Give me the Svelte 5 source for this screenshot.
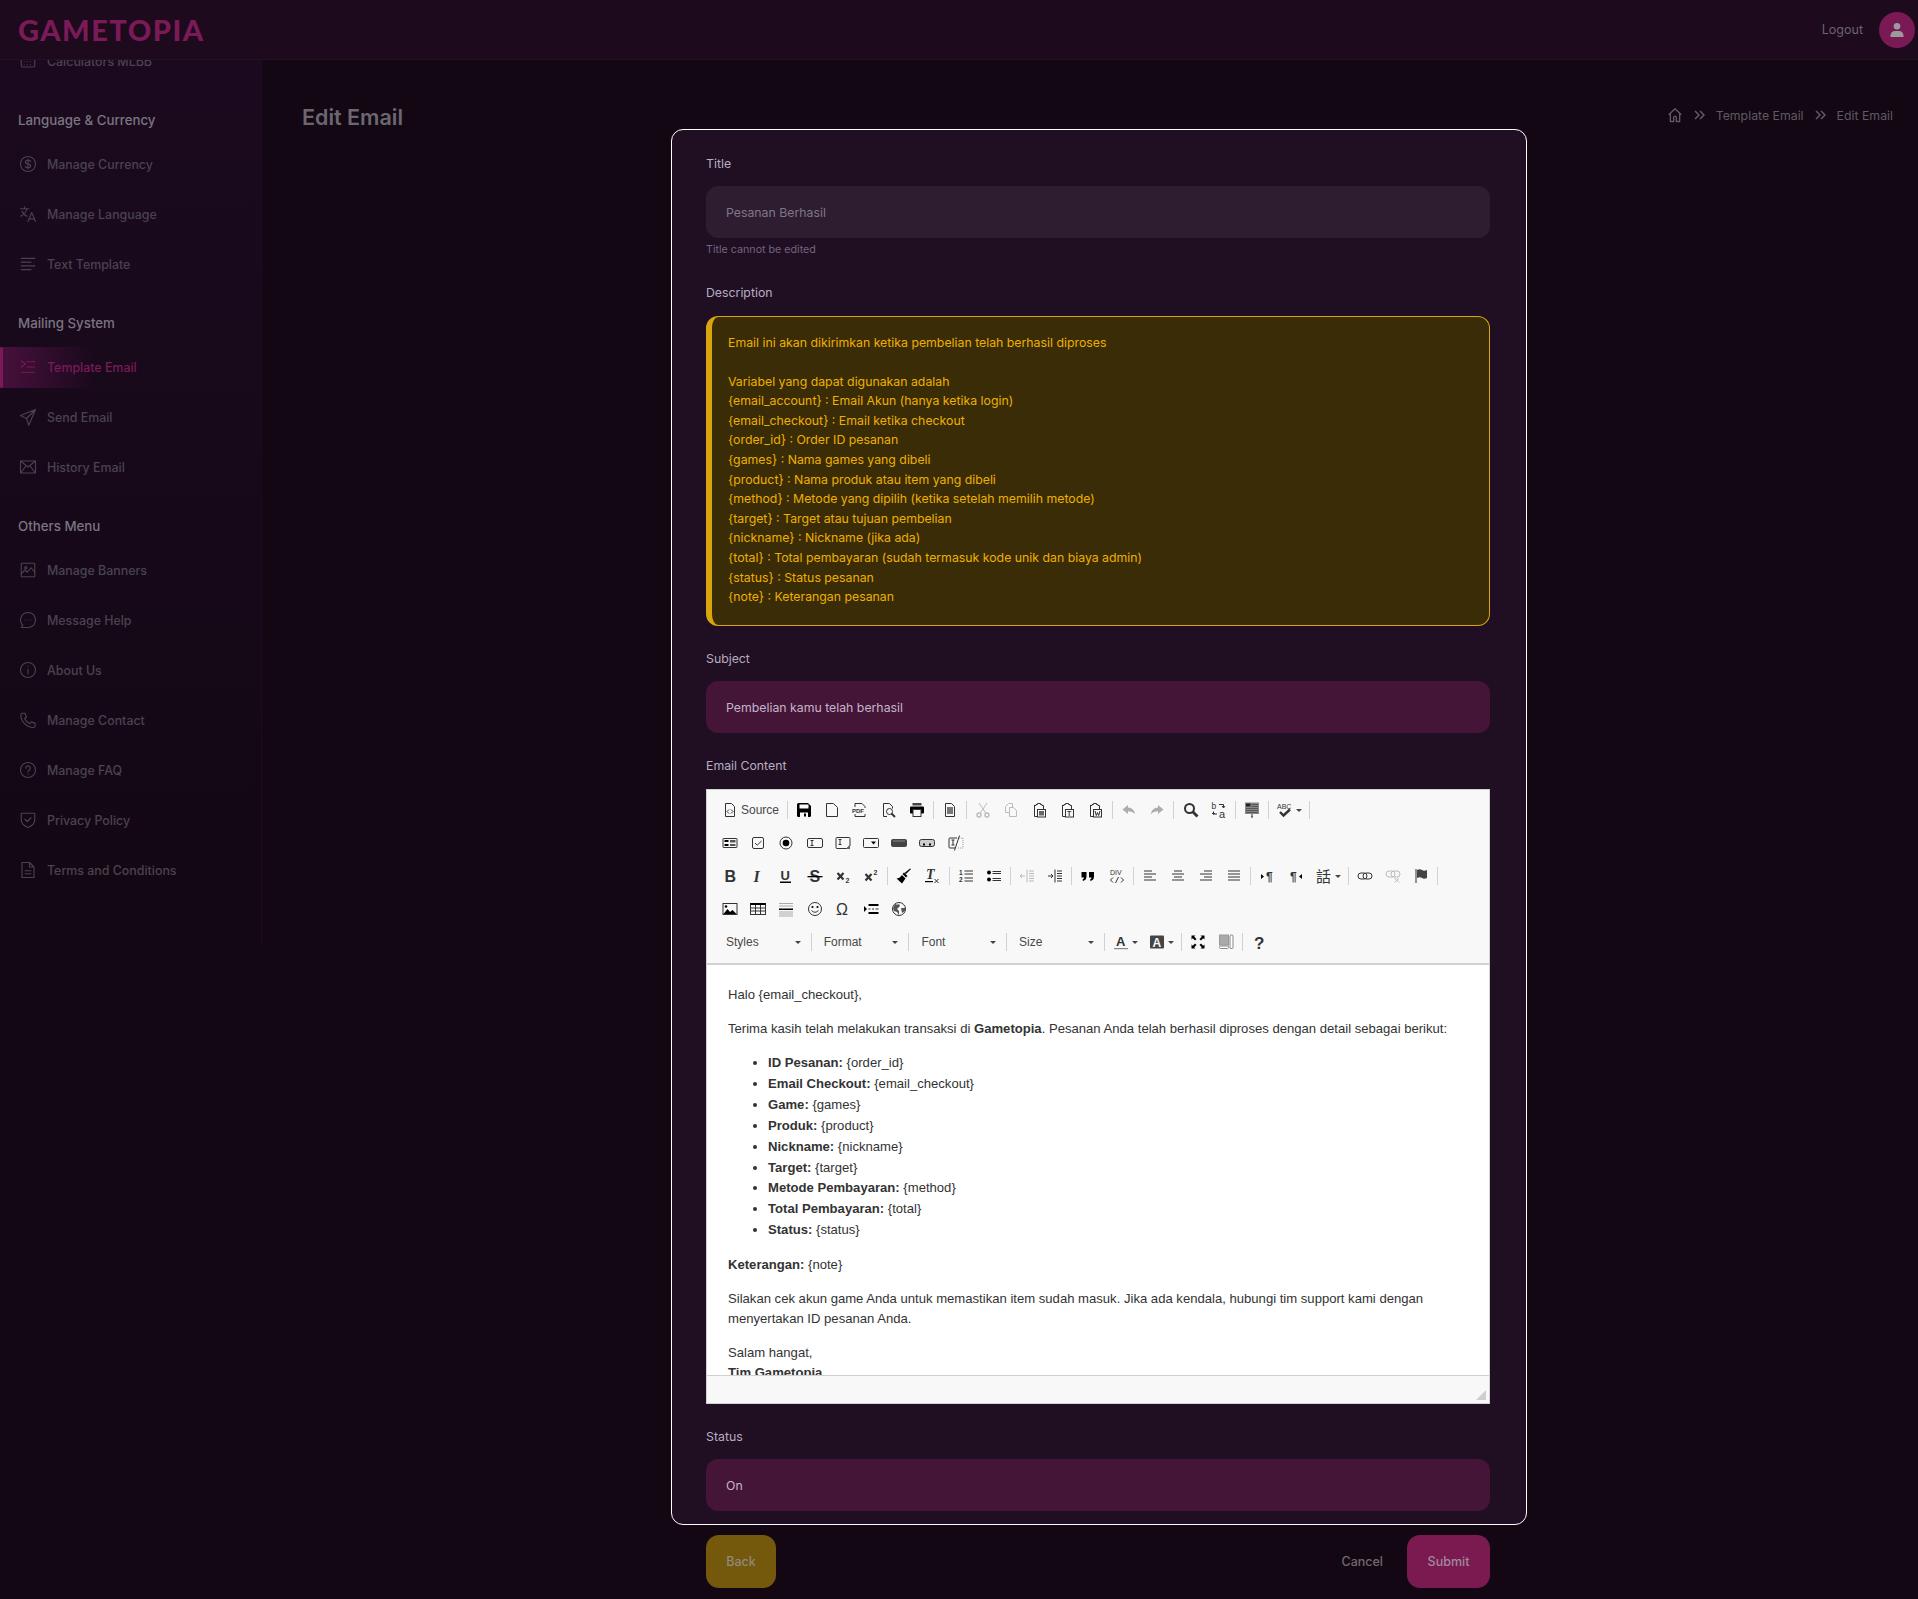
<script>
  const line = 'fill="none" stroke="#333" stroke-width="1"';
  const line2 = 'fill="none" stroke="#333" stroke-width="2"';
  const label = (x, y, size, text, extra = '') =>
    `<text x="${x}" y="${y}" font-family="Liberation Sans, sans-serif" font-size="${size}" fill="#333" ${extra}>${text}</text>`;
  const clip = (inner) =>
    `<path d="M2.5 3.500h1.500v-1h1.500v-1h3v1h1.500v1h1.500v4" ${line} stroke-width="1.200"/><path d="M2.500 3v11.500h4" ${line}/><rect x="5.500" y="7.500" width="8" height="7.500" fill="#f8f8f8" stroke="#333"/>${inner}`;

  const icons = {
    source: `<path d="M3.500 1.500h6l3 3v10h-9z" ${line}/><path d="M7 7.500l-2 2 2 2M9 7.500l2 2-2 2" ${line}/>`,
    save: `<path d="M1 2.500q0-1.500 1.500-1.500h9.500l3 3v9.500q0 1.500-1.500 1.500h-11q-1.500 0-1.500-1.500z"/><rect x="3.500" y="2.500" width="9" height="4" fill="#f8f8f8"/><rect x="4" y="10.500" width="8" height="4.500" fill="#f8f8f8"/><rect x="8" y="11.500" width="2" height="3"/>`,
    newpage: `<path d="M2.500 1.500h7l4 4v9h-11z" ${line}/>`,
    pdf: `<path d="M3 5V1.500h7l3 3V6M3 12v2.500h10V12" ${line}/>${label(0, 10.500, 6, 'PDF', 'font-weight="700"')}`,
    preview: `<path d="M6 14.500H2.500v-13h6l3 3v2" ${line}/><circle cx="8.500" cy="9.500" r="3" ${line} stroke-width="1.300"/><path d="M10.500 11.500l3.500 3.500" ${line2}/>`,
    print: `<rect x="3.500" y="1" width="9" height="2.500" fill="#444"/><rect x="1" y="4.500" width="14" height="7" rx="1"/><rect x="4" y="7.500" width="8" height="7" fill="#f8f8f8" stroke="#333"/>`,
    doc: `<path d="M3.500 1.500h6l3 3v10h-9z" ${line}/><path d="M5 5h6v7H5z" fill="#777"/>`,
    cut: `<circle cx="4" cy="13" r="2" fill="none" stroke="#333" stroke-width="1.400"/><circle cx="12" cy="13" r="2" fill="none" stroke="#333" stroke-width="1.400"/><path d="M5 11.500L12 1M11 11.500L4 1" ${line} stroke-width="1.600"/>`,
    copy: `<path d="M9.500 5V1.500h-4l-3 3v6h4" ${line}/><path d="M6.500 5.500h4l3 3v6h-7z" ${line}/>`,
    paste: clip(`<rect x="7" y="9" width="5" height="4.500" fill="#666"/>`),
    pastetext: clip(label(7, 13.600, 7, 'T', 'font-weight="700"')),
    pasteword: clip(`<path d="M7 9l1.300 4.500 1.200-3 1.200 3L12 9" ${line}/>`),
    undo: `<path d="M7 3L1.500 7.500 7 12V9.200c3 0 5 .8 7 3-.3-4-3-6.700-7-6.800z"/>`,
    redo: `<path d="M9 3l5.500 4.500L9 12V9.200c-3 0-5 .8-7 3 .3-4 3-6.700 7-6.800z"/>`,
    find: `<circle cx="6.500" cy="6.500" r="4.500" fill="none" stroke="#333" stroke-width="2"/><path d="M9.500 9.500l5 5" fill="none" stroke="#333" stroke-width="2.800"/>`,
    replace: `${label(0.500, 7, 8.500, 'b')}${label(8, 15.500, 11, 'a')}<path d="M8 2.500h4.500v3M14 4l-1.500 2L11 4M6 12H2.500V9.500M1 11l1.500 1.500L4 11" ${line}/>`,
    selectall: `<rect x="1" y="0.500" width="14" height="11.500" fill="#888"/><path d="M2 1.500h4.500v3H2z" fill="#222"/><path d="M7.500 2.500h6.500M7.500 4.500h6.500M2 6.500h12M2 8.500h12M2 10.500h12" stroke="#555"/><path d="M8 12v3M7 15h2" ${line}/>`,
    spell: `${label(0, 7, 7, 'ABC')}<path d="M3 10l3.500 3.500 6.500-6" fill="none" stroke="#333" stroke-width="2.400"/>`,
    form: `<rect x="1" y="3.500" width="14" height="9" rx="0.500" ${line} fill="#ddd"/><rect x="2.500" y="5" width="4" height="2"/><rect x="2.500" y="9" width="4" height="2"/><rect x="8" y="5" width="5.500" height="2.500" fill="#555"/><rect x="8" y="9" width="5.500" height="2" fill="#555"/>`,
    checkbox: `<rect x="2.500" y="2.500" width="11" height="11" rx="1.500" ${line}/><path d="M5 8l2.200 2.200L11.500 6" ${line} stroke-width="1.800"/>`,
    radio: `<circle cx="8" cy="8" r="6" ${line}/><circle cx="8" cy="8" r="3.300"/>`,
    textfield: `<rect x="0.500" y="3.500" width="15" height="9" rx="1.500" ${line}/><path d="M3.500 5.500h3M3.500 10.500h3M5 5.500v5" ${line}/>`,
    textarea: `<path d="M12 13.500H2q-1 0-1-1v-9q0-1 1-1h12q1 0 1 1v7z" ${line}/><path d="M15 9.500l-4 4.500h4z" fill="#666"/><path d="M3.500 4.500h3M3.500 9.500h3M5 4.500v5" ${line}/>`,
    select: `<rect x="0.500" y="3.500" width="15" height="9" rx="1" ${line}/><path d="M8 6.500h5l-2.500 3z"/>`,
    button: `<rect x="0" y="4" width="16" height="8" rx="2" fill="#444"/><rect x="2" y="5.500" width="12" height="1" fill="#888"/>`,
    hiddenbtn: `<rect x="0.500" y="4.500" width="15" height="7" rx="2" fill="#ccc" stroke="#333"/><path d="M4 8.500h2v2H4zM10 8.500h2v2h-2z"/>`,
    hidden: `<path d="M9 3H2q-1 0-1 1v8q0 1 1 1h5" ${line}/><path d="M11 3h4v10h-6" fill="none" stroke="#999" stroke-dasharray="1 1"/><path d="M3.500 5h3M3.500 10h3M5 5v5" ${line}/><path d="M11.500 0.500l-5 15" ${line} stroke-width="1.300"/>`,
    bold: label(2.500, 14, 16, 'B', 'font-weight="700"'),
    italic: `<text x="3.500" y="13.500" font-family="Liberation Serif, serif" font-size="16" font-style="italic" font-weight="700" fill="#333">I</text>`,
    underline: `${label(2.500, 11.500, 13, 'U', 'font-weight="700"')}<rect x="2" y="13.500" width="11" height="1.500"/>`,
    strike: `${label(2.500, 14, 16, 'S', 'font-weight="700"')}<rect x="0.500" y="8" width="15" height="1.300"/>`,
    subscript: `<path d="M2.500 5l6 6.500M8.500 5l-6 6.500" fill="none" stroke="#333" stroke-width="2.200"/>${label(10.500, 15, 7, '2', 'font-weight="700"')}`,
    superscript: `<path d="M2.500 6l6 6.500M8.500 6l-6 6.500" fill="none" stroke="#333" stroke-width="2.200"/>${label(10.500, 7, 7, '2', 'font-weight="700"')}`,
    brush: `<path d="M10 6l5-5-1-.5L8.500 5z"/><path d="M8 4.500l3.500 3.500-1.500 1.500L6.500 6z"/><path d="M6 7l3.500 3.500L6 15.500 0.500 10.500q3 0 5.500-3.500z"/>`,
    removeformat: `<text x="2" y="11" font-family="Liberation Serif, serif" font-size="14" font-style="italic" font-weight="700" fill="#333">T</text><rect x="1" y="13" width="8" height="1.200"/><path d="M10.500 11l4 4M14.500 11l-4 4" ${line} stroke-width="1.500"/>`,
    ol: `${label(1, 7, 6.500, '1', 'font-weight="700"')}${label(1, 14, 6.500, '2', 'font-weight="700"')}<path d="M6.500 3h8.500M6.500 6h8.500M6.500 10h8.500M6.500 13h8.500" ${line}/>`,
    ul: `<circle cx="3" cy="4.500" r="2"/><circle cx="3" cy="11.500" r="2"/><path d="M6.500 3.500h8.500M6.500 5.500h8.500M6.500 10.500h8.500M6.500 12.500h8.500" ${line}/>`,
    outdent: `<path d="M8 1.500v13M10 3h5M10 5.500h5M10 8h5M10 10.500h5M10 13h5" ${line}/><path d="M6 8H1M3 6L1 8l2 2" ${line}/>`,
    indent: `<path d="M8 1.500v13M10 3h5M10 5.500h5M10 8h5M10 10.500h5M10 13h5" ${line}/><path d="M1 8h5M4 6l2 2-2 2" ${line}/>`,
    quote: `<path d="M1.500 4h5v4.500Q6.500 12 3 13l-.5-1.300q1.500-.7 1.500-2.200H1.500zM9 4h5v4.500q0 3.500-3.500 4.500l-.5-1.300q1.500-.7 1.500-2.200H9z"/>`,
    div: `${label(1, 7, 7, 'DIV')}<path d="M4 9.500l-2.500 2.500L4 14.500M12 9.500l2.500 2.500-2.500 2.500M9.500 9l-3 6" ${line}/>`,
    left: `<path d="M2 3h8M2 6h12M2 9h8M2 12h12" ${line} stroke-width="1.700"/>`,
    center: `<path d="M4 3h8M2 6h12M4 9h8M2 12h12" ${line} stroke-width="1.700"/>`,
    right: `<path d="M6 3h8M2 6h12M6 9h8M2 12h12" ${line} stroke-width="1.700"/>`,
    justify: `<path d="M2 3h12M2 6h12M2 9h12M2 12h12" ${line} stroke-width="1.700"/>`,
    ltr: `<path d="M2 6l3 2.500-3 2.500z"/>${label(7, 12.500, 12, '¶', 'font-weight="700"')}`,
    rtl: `<path d="M14 6l-3 2.500 3 2.500z"/>${label(2, 12.500, 12, '¶', 'font-weight="700"')}`,
    lang: `<text x="0" y="13.500" font-family="Noto Sans CJK TC, sans-serif" font-size="15" fill="#333">話</text>`,
    link: `<rect x="1" y="5" width="9" height="6" rx="3" ${line} stroke-width="1.500"/><rect x="6" y="5" width="9" height="6" rx="3" ${line} stroke-width="1.500"/>`,
    unlink: `<rect x="1" y="3" width="9" height="6" rx="3" ${line} stroke-width="1.300"/><rect x="6" y="3" width="9" height="6" rx="3" ${line} stroke-width="1.300"/><path d="M9.500 10l4.500 4.500M14 10l-4.500 4.500" ${line} stroke-width="1.500"/>`,
    anchor: `<path d="M3 1v14" ${line} stroke-width="1.300"/><path d="M4 2q3-1.500 5 0t5 0v8q-3 1.500-5 0t-5 0z" fill="#444"/>`,
    image: `<rect x="1" y="2.500" width="14" height="11" fill="#f8f8f8" stroke="#333"/><path d="M1.500 13l4-5 2.500 3 2.500-2 4 4z"/><circle cx="4" cy="5.500" r="1.300"/>`,
    table: `<rect x="0.500" y="2.500" width="15" height="11" ${line}/><rect x="0.500" y="2" width="15" height="2"/><path d="M5.500 4v9M10.500 4v9M1 7h14M1 10h14" ${line}/>`,
    hr: `<path d="M1 2.500h14M1 5h14M1 11h14M1 13h14M1 15h14" stroke="#aaa"/><rect x="1" y="7.500" width="14" height="1.500"/>`,
    smiley: `<circle cx="8" cy="8" r="6.500" ${line}/><circle cx="5.500" cy="6" r="1.100"/><circle cx="10.500" cy="6" r="1.100"/><path d="M4.500 9.500q3.500 3.500 7 0" ${line} stroke-width="1.200"/>`,
    omega: label(1, 14, 16, 'Ω'),
    pagebreak: `<path d="M1 5v6l3-3z"/><rect x="5.500" y="3" width="10" height="2"/><rect x="5.500" y="11" width="10" height="2"/><path d="M5.500 8h2M9 8h2M12.500 8h3" ${line} stroke-width="1.500"/>`,
    iframe: `<circle cx="8" cy="8" r="6.500" ${line}/><path d="M4 3q3 1 4 0l1 2-3 3 2 2v4l-2-3-3-1-1-3zM10 7l4 0 0 3-3 2z" fill="#555"/>`,
    colorA: `${label(3, 11.500, 13, 'A', 'font-weight="700"')}<rect x="1" y="14" width="14" height="1.200" fill="#888"/>`,
    bgA: `<rect x="1" y="1.500" width="14" height="13" rx="1" fill="#444"/><text x="3.500" y="12.500" font-family="Liberation Sans, sans-serif" font-weight="700" font-size="12" fill="#f8f8f8">A</text>`,
    maximize: `<path d="M1.500 1.500l4 0-1.300 1.300L6.500 5 5 6.500 2.800 4.200 1.500 5.500zM14.500 1.500v4l-1.300-1.300L11 6.500 9.500 5l2.300-2.200L10.500 1.500zM1.500 14.500v-4l1.300 1.300L5 9.500 6.500 11l-2.300 2.200 1.300 1.300zM14.500 14.500h-4l1.300-1.300L9.500 11 11 9.500l2.200 2.300 1.300-1.300z"/>`,
    showblocks: `<rect x="1.500" y="1" width="9" height="10" fill="#aaa" stroke="#999"/><rect x="1.500" y="12" width="9" height="2.500" rx="1" fill="#fff" stroke="#888"/><rect x="12" y="1" width="3" height="13.500" rx="1" fill="#fff" stroke="#888"/>`,
    help: label(3, 14.500, 17, '?', 'font-weight="700"'),
  };

  // '|' draws a separator, '!' marks a disabled button, '^' adds a dropdown arrow
  const rows = [
    ['source*', '|', 'save', 'newpage', 'pdf', 'preview', 'print', '|', 'doc', '|', '!cut', '!copy', 'paste', 'pastetext', 'pasteword', '|', '!undo', '!redo', '|', 'find', 'replace', '|', 'selectall', '|', '^spell', '|'],
    ['form', 'checkbox', 'radio', 'textfield', 'textarea', 'select', 'button', 'hiddenbtn', 'hidden'],
    ['bold', 'italic', 'underline', 'strike', 'subscript', 'superscript', '|', 'brush', 'removeformat', '|', 'ol', 'ul', '|', '!outdent', 'indent', '|', 'quote', 'div', '|', 'left', 'center', 'right', 'justify', '|', 'ltr', 'rtl', '^lang', '|', 'link', '!unlink', 'anchor', '|'],
    ['image', 'table', 'hr', 'smiley', 'omega', 'pagebreak', 'iframe'],
  ];
  const parse = (raw) => ({
    name: raw.replace(/[!^*]/g, ''),
    disabled: raw[0] === '!',
    caret: raw[0] === '^',
    text: raw.endsWith('*') ? 'Source' : '',
  });

  const combos = ['Styles', 'Format', 'Font', 'Size'];
  const tail = ['^colorA', '^bgA', '|', 'maximize', 'showblocks', '|', 'help'];

  const navIcons = {
    calc: '<rect x="3" y="4" width="18" height="16" rx="2"/><path d="M3 9h18M7 13h.01M11 13h.01M15 13h.01M7 17h.01M11 17h.01M15 17h.01"/>',
    dollar: '<circle cx="12" cy="12" r="10"/><path d="M15.500 8.500c-.5-1-1.800-1.500-3.500-1.500-2 0-3.500 1-3.500 2.500s1.500 2.200 3.500 2.500 3.500 1 3.500 2.500-1.500 2.500-3.500 2.500c-1.700 0-3-.5-3.500-1.500M12 5.500v13"/>',
    lang: '<path d="M2 5h11M7.500 2.500V5M10.500 5c-1 4.500-4 8-8.500 10M4 8c1 3 4 6 7 7M12 22l5-12 5 12M13.500 18.500h7"/>',
    lines: '<path d="M3 5h18M3 10h13M3 15h18M3 20h13" transform="translate(0 -.5)"/>',
    indent: '<path d="M3 4l6 4-6 4M11 5h10M11 12h10M3 19h18"/>',
    send: '<path d="M22 2L2 10l8 4 3 9zM22 2L10 14"/>',
    mail: '<rect x="2" y="4" width="20" height="16" rx="1"/><path d="M2 4l10 8 10-8M2 20l7-9M22 20l-7-9"/>',
    image: '<rect x="3" y="3" width="18" height="18" rx="1"/><circle cx="9" cy="9" r="1.500"/><path d="M3 17l5-5 3 3 5-6 5 6"/>',
    chat: '<path d="M12 2a10 10 0 0 1 0 20H3l2-3A10 10 0 0 1 12 2z"/><path d="M8 12h.01M12 12h.01M16 12h.01"/>',
    info: '<circle cx="12" cy="12" r="10"/><path d="M12 11v6M12 7h.01"/>',
    phone: '<path d="M5 3l3 0 2 5-2.500 2a13 13 0 0 0 7 7l2-2.500 5 2v3c0 1.500-1 2.500-2.500 2.500C10 21.500 2.500 14 2.500 5.500 2.500 4 3.500 3 5 3z"/>',
    help: '<circle cx="12" cy="12" r="10"/><path d="M9 9.500a3 3 0 1 1 4.500 2.600c-1 .6-1.500 1.200-1.500 2.400M12 17.500h.01"/>',
    shield: '<path d="M3 3h18v9c0 5-4 8-9 10-5-2-9-5-9-10zM8 11l3 3 5-5"/>',
    file: '<path d="M4 2h10l6 6v14H4zM14 2v6h6M8 13h8M8 17h8"/>',
  };

  const nav = [
    { items: [['calc', 'Calculators MLBB']] },
    { title: 'Language & Currency', items: [['dollar', 'Manage Currency'], ['lang', 'Manage Language'], ['lines', 'Text Template']] },
    { title: 'Mailing System', items: [['indent', 'Template Email', true], ['send', 'Send Email'], ['mail', 'History Email']] },
    { title: 'Others Menu', items: [['image', 'Manage Banners'], ['chat', 'Message Help'], ['info', 'About Us'], ['phone', 'Manage Contact'], ['help', 'Manage FAQ'], ['shield', 'Privacy Policy'], ['file', 'Terms and Conditions']] },
  ];

  const description = [
    'Email ini akan dikirimkan ketika pembelian telah berhasil diproses',
    '',
    'Variabel yang dapat digunakan adalah',
    '{email_account} : Email Akun (hanya ketika login)',
    '{email_checkout} : Email ketika checkout',
    '{order_id} : Order ID pesanan',
    '{games} : Nama games yang dibeli',
    '{product} : Nama produk atau item yang dibeli',
    '{method} : Metode yang dipilih (ketika setelah memilih metode)',
    '{target} : Target atau tujuan pembelian',
    '{nickname} : Nickname (jika ada)',
    '{total} : Total pembayaran (sudah termasuk kode unik dan biaya admin)',
    '{status} : Status pesanan',
    '{note} : Keterangan pesanan',
  ];

  const details = [
    ['ID Pesanan:', '{order_id}'],
    ['Email Checkout:', '{email_checkout}'],
    ['Game:', '{games}'],
    ['Produk:', '{product}'],
    ['Nickname:', '{nickname}'],
    ['Target:', '{target}'],
    ['Metode Pembayaran:', '{method}'],
    ['Total Pembayaran:', '{total}'],
    ['Status:', '{status}'],
  ];
</script>

{#snippet tool(raw)}
  {#if raw === '|'}
    <span class="sep"></span>
  {:else}
    {@const b = parse(raw)}
    <span class="btn" class:disabled={b.disabled} class:has-caret={b.caret} class:has-text={b.text}>
      <svg width="16" height="16" viewBox="0 0 16 16">{@html icons[b.name]}</svg>
      {#if b.text}<span class="btn-text">{b.text}</span>{/if}
      {#if b.caret}<i class="caret"></i>{/if}
    </span>
  {/if}
{/snippet}

{#snippet chevrons()}
  <svg width="11" height="10" viewBox="0 0 11 10" fill="none" stroke="currentColor" stroke-width="1.500"><path d="M1 1l4 4-4 4M6 1l4 4-4 4"/></svg>
{/snippet}

<div class="page">
  <header class="topbar">
    <div class="logo">GAMETOPIA</div>
    <div class="account">
      <span>Logout</span>
      <div class="avatar">
        <svg width="16" height="16" viewBox="0 0 16 16" fill="#9c9a9c"><circle cx="8" cy="4.300" r="3.300"/><path d="M1.500 15v-1.500C1.500 11 3.500 9 6 9h4c2.500 0 4.500 2 4.500 4.500V15z"/></svg>
      </div>
    </div>
  </header>

  <div class="body">
    <aside class="sidebar">
      <div class="sidebar-scroll">
        {#each nav as section}
          {#if section.title}<h4>{section.title}</h4>{/if}
          {#each section.items as [icon, name, active]}
            <div class="nav-item" class:active>
              <svg width="18" height="18" viewBox="0 0 24 24" fill="none" stroke="currentColor" stroke-width="1.500" stroke-linecap="round" stroke-linejoin="round">{@html navIcons[icon]}</svg>
              <span>{name}</span>
            </div>
          {/each}
        {/each}
      </div>
    </aside>

    <main class="content">
      <h1>Edit Email</h1>
      <nav class="crumbs">
        <svg width="16" height="17" viewBox="0 0 24 24" fill="none" stroke="currentColor" stroke-width="2" stroke-linejoin="round"><path d="M2.500 11L12 2l9.500 9M5 9v12h5v-6a2 2 0 0 1 4 0v6h5V9"/></svg>
        {@render chevrons()}
        <span>Template Email</span>
        {@render chevrons()}
        <span>Edit Email</span>
      </nav>
    </main>
  </div>

  <div class="overlay">
    <div class="dialog">
      <form class="modal">
        <div class="field">
          <label for="title">Title</label>
          <div class="input readonly" id="title">Pesanan Berhasil</div>
          <small>Title cannot be edited</small>
        </div>

        <div class="field">
          <label for="desc">Description</label>
          <div class="alert" id="desc">
            {#each description as row}
              <div class="alert-row">{row}</div>
            {/each}
          </div>
        </div>

        <div class="field">
          <label for="subject">Subject</label>
          <div class="input" id="subject">Pembelian kamu telah berhasil</div>
        </div>

        <div class="field">
          <label for="editor">Email Content</label>
          <div class="editor" id="editor">
            <div class="toolbar">
              {#each rows as row}
                <div class="tool-row">
                  {#each row as raw}{@render tool(raw)}{/each}
                </div>
              {/each}
              <div class="tool-row">
                {#each combos as name}
                  <span class="combo"><span>{name}</span><i class="caret"></i></span>
                  <span class="sep"></span>
                {/each}
                {#each tail as raw}{@render tool(raw)}{/each}
              </div>
            </div>
            <div class="doc">
              <p>Halo {'{email_checkout}'},</p>
              <p>Terima kasih telah melakukan transaksi di <strong>Gametopia</strong>. Pesanan Anda telah berhasil diproses dengan detail sebagai berikut:</p>
              <ul>
                {#each details as [key, value]}
                  <li><strong>{key}</strong> {value}</li>
                {/each}
              </ul>
              <p><strong>Keterangan:</strong> {'{note}'}</p>
              <p>Silakan cek akun game Anda untuk memastikan item sudah masuk. Jika ada kendala, hubungi tim support kami dengan menyertakan ID pesanan Anda.</p>
              <p>Salam hangat,<br /><strong>Tim Gametopia</strong></p>
            </div>
            <div class="statusbar"><i class="grip"></i></div>
          </div>
        </div>

        <div class="field">
          <label for="status">Status</label>
          <div class="input" id="status">On</div>
        </div>
      </form>

      <div class="actions">
        <button class="back" type="button">Back</button>
        <span class="cancel">Cancel</span>
        <button class="submit" type="button">Submit</button>
      </div>
    </div>
  </div>
</div>

<style>
  :global(body) {
    margin: 0;
    background: #120713;
  }

  .page {
    position: relative;
    height: 1599px;
    overflow: hidden;
    background: #120713;
    font-family: Inter, "Liberation Sans", sans-serif;
    font-size: 12.3px;
  }

  .topbar {
    position: relative;
    z-index: 1;
    height: 60px;
    box-sizing: border-box;
    display: flex;
    align-items: center;
    justify-content: space-between;
    padding: 0 3px 0 18px;
    background: #1d0a1c;
    border-bottom: 1px solid #24101f;
  }

  .logo {
    color: #7a1a58;
    font-family: Lato, sans-serif;
    font-weight: 900;
    font-size: 29px;
    letter-spacing: 1.5px;
  }

  .account {
    display: flex;
    align-items: center;
    gap: 16px;
    font-size: 12.5px;
    color: #6a6570;
  }

  .avatar {
    width: 36px;
    height: 36px;
    border-radius: 50%;
    background: #7a1a55;
    display: flex;
    align-items: center;
    justify-content: center;
  }

  .body {
    display: flex;
    align-items: flex-start;
  }

  .sidebar {
    width: 262px;
    height: 885px;
    flex: none;
    overflow: hidden;
    box-sizing: border-box;
    border-right: 1px solid #1d0c21;
    background: linear-gradient(180deg, #1b0a1f, #120713);
  }

  .sidebar-scroll {
    margin-top: -24px;
  }

  h4 {
    margin: 0;
    padding: 24px 18px 9px 18px;
    height: 20px;
    line-height: 20px;
    font-size: 13.3px;
    font-weight: 500;
    color: #7b7580;
  }

  .nav-item {
    height: 50px;
    display: flex;
    align-items: center;
    gap: 10px;
    padding-left: 19px;
    color: #4a434f;
    font-size: 12.4px;
    font-weight: 500;
    position: relative;
  }

  .nav-item.active {
    color: #7a1a58;
    background: linear-gradient(90deg, #48103d 0, transparent 96px);
    background-repeat: no-repeat;
    background-size: 100% 41px;
    background-position: 0 50%;
  }

  .nav-item.active::before {
    content: "";
    position: absolute;
    left: 0;
    top: 5px;
    bottom: 4px;
    width: 3px;
    border-radius: 2px;
    background: #7a1a58;
  }

  .content {
    flex: 1;
    display: flex;
    align-items: flex-start;
    justify-content: space-between;
    padding: 44px 25px 0 40px;
  }

  h1 {
    margin: 0;
    font-size: 21.5px;
    line-height: 26px;
    font-weight: 600;
    color: #6b6770;
  }

  .crumbs {
    display: flex;
    align-items: center;
    gap: 11px;
    height: 22px;
    color: #5f5a63;
  }

  .overlay {
    position: absolute;
    inset: 0;
    display: flex;
    justify-content: center;
    padding: 129px 0 0 280px;
    z-index: 2;
  }

  .dialog {
    width: 856px;
  }

  .modal {
    box-sizing: border-box;
    height: 1396px;
    padding: 23.5px 36px 0 34px;
    background: #200e23;
    border: 1px solid #fff;
    border-radius: 12px;
  }

  .field {
    margin-bottom: 23px;
  }

  label {
    display: block;
    height: 20px;
    line-height: 20px;
    margin-bottom: 12.5px;
    color: #b5aec0;
  }

  .input {
    box-sizing: border-box;
    height: 52px;
    padding: 0 20px;
    display: flex;
    align-items: center;
    border-radius: 12px;
    background: #451538;
    color: #c4b4ca;
  }

  .input.readonly {
    background: #2e1c30;
    color: #7e7789;
  }

  small {
    display: block;
    margin-top: 4px;
    height: 18px;
    line-height: 16px;
    font-size: 10.7px;
    color: #6f6780;
  }

  .alert {
    box-sizing: border-box;
    height: 310px;
    padding: 16px 16px;
    background: #3a2c06;
    color: #eeb000;
    border: 1px solid #d8a50f;
    border-left-width: 6px;
    border-radius: 12px;
  }

  .alert-row {
    height: 19.6px;
    line-height: 19.6px;
  }

  .editor {
    box-sizing: border-box;
    height: 615px;
    display: flex;
    flex-direction: column;
    background: #fff;
    color: #333;
    border: 1px solid #d1d1d1;
    font-family: "Liberation Sans", Arial, sans-serif;
  }

  .toolbar {
    height: 175px;
    box-sizing: border-box;
    padding: 4px 0 0 9px;
    background: #f8f8f8;
    border-bottom: 2px solid #d1d1d1;
  }

  .tool-row {
    height: 33px;
    display: flex;
    align-items: center;
    font-size: 12px;
    color: #484848;
  }

  .btn {
    width: 28.2px;
    height: 24px;
    flex: none;
    display: inline-flex;
    align-items: center;
    justify-content: center;
    gap: 3px;
  }

  .btn.has-text {
    width: 69px;
    justify-content: flex-start;
    padding-left: 6px;
    box-sizing: border-box;
  }

  .btn.has-caret {
    width: 36px;
    justify-content: flex-start;
    padding-left: 6px;
    box-sizing: border-box;
  }

  .btn.disabled svg {
    opacity: 0.3;
  }

  .btn svg {
    flex: none;
    overflow: visible;
  }

  .caret {
    display: block;
    width: 0;
    height: 0;
    flex: none;
    border: 3px solid transparent;
    border-top-color: #444;
    border-bottom: 0;
  }

  .sep {
    flex: none;
    width: 1px;
    height: 18px;
    margin: 0 2px;
    background: #d1d1d1;
  }

  .combo {
    width: 92.7px;
    height: 24px;
    flex: none;
    box-sizing: border-box;
    display: flex;
    align-items: center;
    justify-content: space-between;
    padding: 0 8px 0 10px;
  }

  .doc {
    flex: 1;
    min-height: 0;
    overflow: hidden;
    padding: 6.5px 20px 0 21px;
    font-size: 13.1px;
    line-height: 20px;
    color: #333;
  }

  .doc p {
    margin: 14px 0;
  }

  .doc ul {
    margin: 12px 0 14px;
    padding-left: 40px;
  }

  .doc li {
    line-height: 20.9px;
  }

  .statusbar {
    height: 27px;
    flex: none;
    position: relative;
    background: #f8f8f8;
    border-top: 1px solid #d1d1d1;
  }

  .grip {
    position: absolute;
    right: 3px;
    bottom: 3px;
    width: 0;
    height: 0;
    border-style: solid;
    border-width: 0 0 10px 10px;
    border-color: transparent transparent #cfcfcf transparent;
  }

  .actions {
    margin-top: 10px;
    height: 53px;
    padding: 0 37px 0 35px;
    display: flex;
    align-items: stretch;
  }

  button {
    border: 0;
    border-radius: 13px;
    font: 500 12.5px Inter, "Liberation Sans", sans-serif;
  }

  .back {
    width: 70px;
    background: #74580c;
    color: #8f8a7a;
  }

  .cancel {
    margin-left: auto;
    margin-right: 24px;
    align-self: center;
    color: #6e6a72;
    font-size: 12.5px;
    font-weight: 500;
  }

  .submit {
    width: 83px;
    background: #7a1a50;
    color: #a08a9c;
  }
</style>
